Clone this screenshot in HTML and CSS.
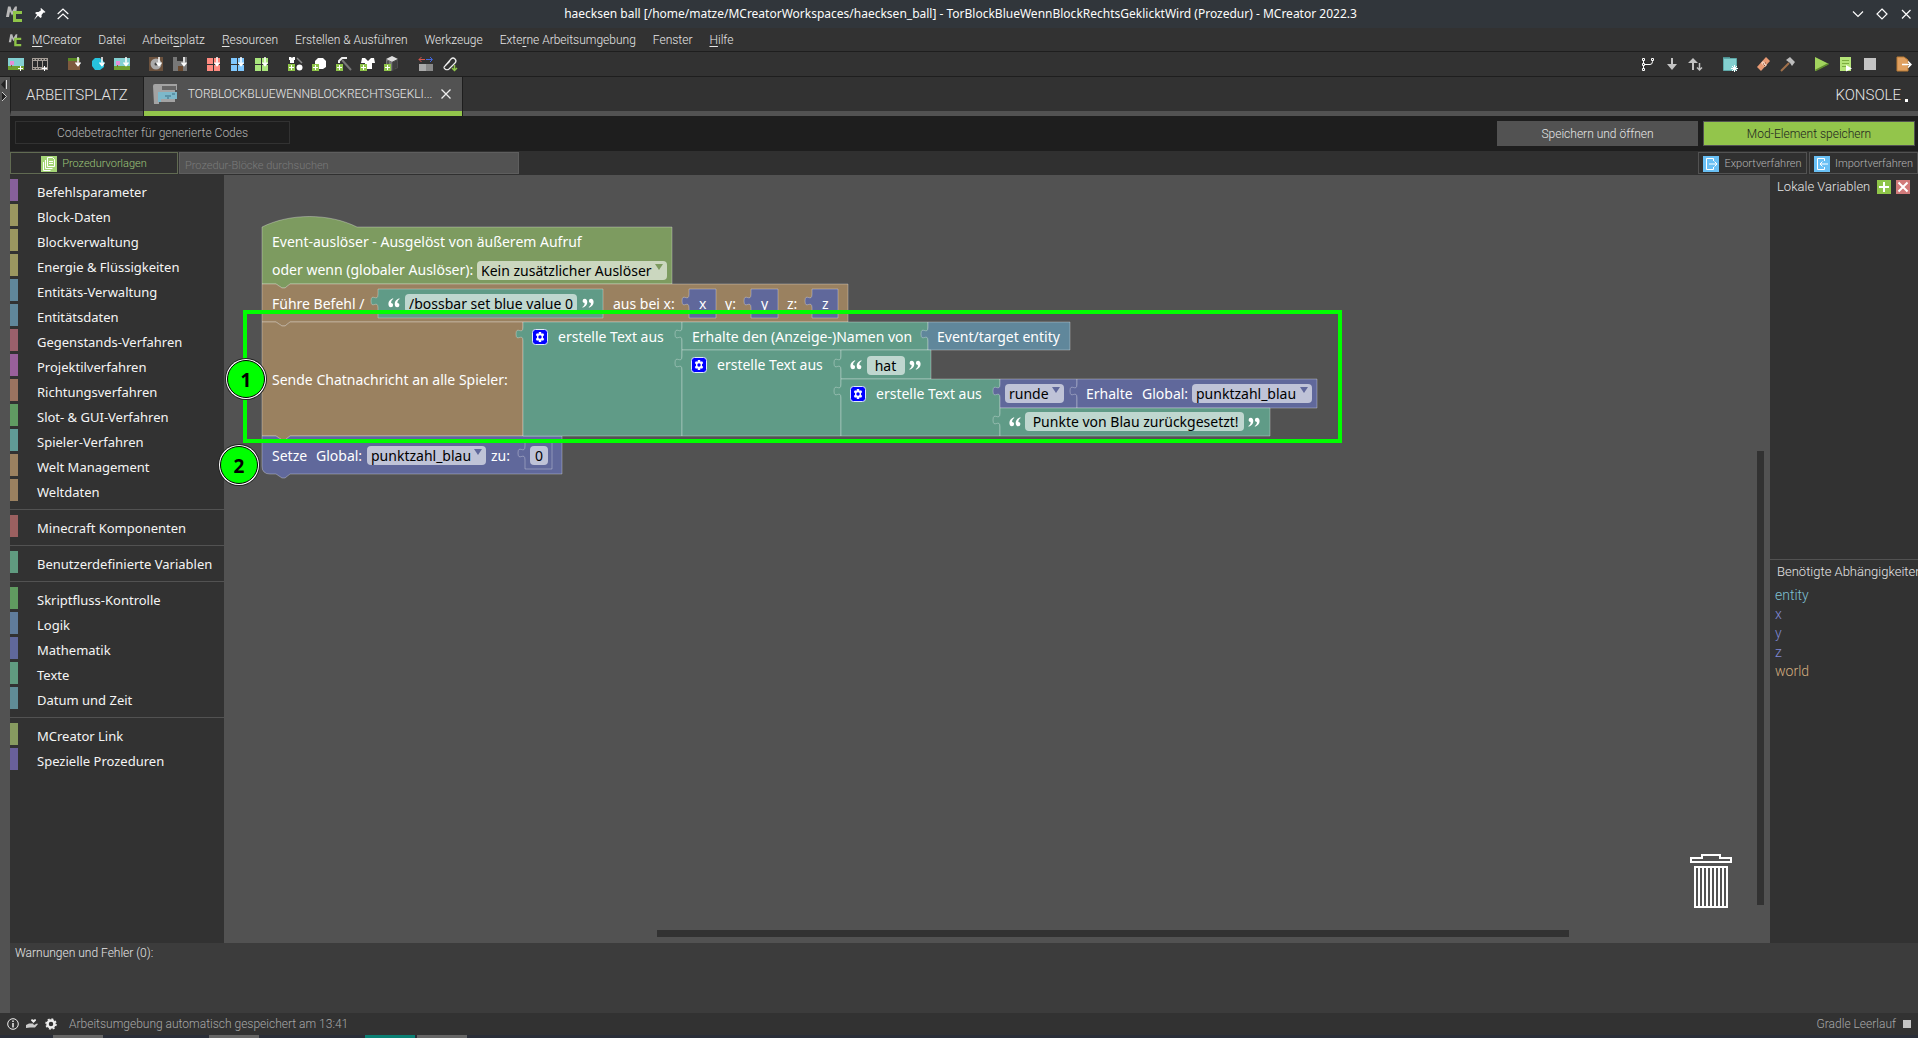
FILE: index.html
```html
<!DOCTYPE html>
<html lang="de">
<head>
<meta charset="utf-8">
<title>haecksen ball - MCreator 2022.3</title>
<link rel="stylesheet" href="styles.css">
</head>
<body>
<svg class="defs" width="0" height="0" aria-hidden="true">
  <defs>
    <symbol id="logo" viewBox="0 0 18 18">
      <path d="M1 12 3 1.500h2.500l1.500 5 3-5H12l-.5 5H9.500L7 10.500 5 6.500 4 12z" fill="#b9b9b9"/>
      <path d="M8 6h9v3h-6v5h6v3H8z" fill="#8fc549"/>
    </symbol>
    <symbol id="down" viewBox="0 0 6 10"><path d="M3 0v8M.5 5.500 3 8.500l2.500-3" fill="none" stroke="#fff" stroke-width="1.500"/></symbol>
    <symbol id="landscape" viewBox="0 0 16 12">
      <path d="M0 0h16v12H0z" fill="#83d0d2"/><path d="M0 8h16v4H0z" fill="#6fa030"/><path d="M2 3h4v4H2z" fill="#e58ed8"/><path d="M3 7h1v2H3z" fill="#83602e"/>
    </symbol>
    <symbol id="windows" viewBox="0 0 13 13"><path d="M0 0h6v6H0zM7 0h6v6H7zM0 7h6v6H0zM7 7h6v6H7z" fill="currentColor"/></symbol>
    <symbol id="plus" viewBox="0 0 7 7"><path d="M0 0h7v7H0z" fill="#8fc549"/><path d="M3 1h1v2h2v1H4v2H3V4H1V3h2z" fill="#fff"/></symbol>
    <symbol id="gear" viewBox="0 0 16 16">
      <rect x=".5" y=".5" width="15" height="15" rx="3" fill="#00f" stroke="#dfe8ff"/>
      <path d="M6.900 3h2.200l.4 1.700 1.600-.5 1.100 1.900L11 7.300v1.400l1.200 1.200-1.100 1.900-1.600-.5-.4 1.700H6.900l-.4-1.700-1.600.5-1.100-1.900L5 8.700V7.300L3.800 6.100l1.100-1.900 1.600.5z" fill="#fff"/>
      <circle cx="8" cy="8" r="1.700" fill="#00f"/>
    </symbol>
    <symbol id="quote-open" viewBox="0 0 12 10">
      <path id="q" d="M5 .3C2.200 1.300.4 3.300.4 6c0 2 1 3.300 2.500 3.300A2.200 2.200 0 0 0 5.100 7.100c0-1.300-.9-2-2-2C3 3.500 3.700 2 5.300 1zM11.300.3C8.500 1.300 6.700 3.300 6.700 6c0 2 1 3.300 2.500 3.300a2.200 2.200 0 0 0 2.200-2.200c0-1.300-.9-2-2-2C9.300 3.500 10 2 11.600 1z" fill="#fff"/>
    </symbol>
    <symbol id="quote-close" viewBox="0 0 12 10"><use href="#q" transform="rotate(180 6 5)"/></symbol>
  </defs>
</svg>

<header class="titlebar">
  <svg width="18" height="18"><use href="#logo"/></svg>
  <svg width="12" height="12" viewBox="0 0 12 12"><path d="M7 0l4.500 4-1.200.8L9.500 4.500 7.500 7l.2 2L6.500 10 4 7.700.5 11.500l-.2-.3L3 6.800 1 5l1.500-1 2 .1L7 2.200 6.500.8z" fill="#fcfcfc"/></svg>
  <svg width="12" height="12" viewBox="0 0 12 12"><path d="M.7 6 6 1l5.300 5M.7 11 6 6l5.300 5" fill="none" stroke="#fcfcfc" stroke-width="1.200"/></svg>
  <h1>haecksen ball [/home/matze/MCreatorWorkspaces/haecksen_ball] - TorBlockBlueWennBlockRechtsGeklicktWird (Prozedur) - MCreator 2022.3</h1>
  <div class="window-buttons">
    <button aria-label="Minimieren"><svg width="12" height="12" viewBox="0 0 12 12"><path d="M1 3.500 6 8.500l5-5" fill="none" stroke="#fcfcfc" stroke-width="1.200"/></svg></button>
    <button aria-label="Maximieren"><svg width="12" height="12" viewBox="0 0 12 12"><path d="M6 1l5 5-5 5-5-5z" fill="none" stroke="#fcfcfc" stroke-width="1.200"/></svg></button>
    <button aria-label="Schließen"><svg width="12" height="12" viewBox="0 0 12 12"><path d="M2 2l8.500 8.500M10.500 2 2 10.500" fill="none" stroke="#fcfcfc" stroke-width="1.200"/></svg></button>
  </div>
</header>

<nav class="menubar">
  <svg width="14" height="14"><use href="#logo"/></svg>
  <button><u>M</u>Creator</button><button>Datei</button><button>Arbeit<u>s</u>platz</button><button><u>R</u>esourcen</button><button>Erstellen &amp; Ausführen</button><button>Werkzeuge</button><button>Exte<u>r</u>ne Arbeitsumgebung</button><button>Fenster</button><button><u>H</u>ilfe</button>
</nav>

<div class="toolbar">
  <div class="tools">
    <button aria-label="Textur"><svg width="16" height="16" viewBox="0 0 16 16"><use href="#landscape" y="2" width="16" height="12"/><path d="M12.500 10v5M10 12.500h5" stroke="#fff"/></svg></button>
    <button aria-label="Animation"><svg width="16" height="16" viewBox="0 0 16 16"><path d="M0 2h16v12H0z" fill="#a79f98"/><path d="M1 5h4v6H1zM6 5h4v6H6zM11 5h4v6h-4z" fill="#2b2b2b"/><path d="M1 3.500h15M1 12.500h15" stroke="#333" stroke-dasharray="1.500"/><path d="M12.500 10v5M10 12.500h5" stroke="#fff"/></svg></button>
  </div>
  <div class="tools">
    <button aria-label="Block importieren"><svg width="16" height="16" viewBox="0 0 16 16"><path d="M2 2h12v12H2z" fill="#7e5a3e"/><path d="M2 2h12v3H2z" fill="#5a8a25"/><use href="#down" x="9" y="1" width="6" height="10"/></svg></button>
    <button aria-label="Objekt importieren"><svg width="16" height="16" viewBox="0 0 16 16"><path d="M5 2h5l4 4v5l-4 3H5l-3-4V5z" fill="#27c3dd"/><use href="#down" x="9" y="1" width="6" height="10"/></svg></button>
    <button aria-label="Bild importieren"><svg width="16" height="16" viewBox="0 0 16 16"><use href="#landscape" y="2" width="16" height="12"/><use href="#down" x="9" y="1" width="6" height="10"/></svg></button>
  </div>
  <div class="tools">
    <button aria-label="Sound importieren"><svg width="16" height="16" viewBox="0 0 16 16"><path d="M1 1h14v14H1z" fill="#6b513d"/><circle cx="8" cy="8" r="5.500" fill="#aaa"/><circle cx="8" cy="8" r="1.500" fill="#444"/><use href="#down" x="8" y="1" width="6" height="10"/></svg></button>
    <button aria-label="Struktur importieren"><svg width="16" height="16" viewBox="0 0 16 16"><path d="M1 1h4v4h6V1h4v14H1z" fill="#777"/><path d="M6 10h5v5H6z" fill="#6b4a30"/><use href="#down" x="9" y="1" width="6" height="10"/></svg></button>
  </div>
  <div class="tools">
    <button aria-label="Java-Modell" class="red"><svg width="16" height="16" viewBox="0 0 16 16"><use href="#windows" x="1" y="2" width="13" height="13"/><use href="#down" x="8" y="1" width="6" height="10"/></svg></button>
    <button aria-label="JSON-Modell" class="blue"><svg width="16" height="16" viewBox="0 0 16 16"><use href="#windows" x="1" y="2" width="13" height="13"/><use href="#down" x="8" y="1" width="6" height="10"/></svg></button>
    <button aria-label="OBJ-Modell" class="lime"><svg width="16" height="16" viewBox="0 0 16 16"><use href="#windows" x="1" y="2" width="13" height="13"/><use href="#down" x="8" y="1" width="6" height="10"/></svg></button>
  </div>
  <div class="tools">
    <button aria-label="Materialpaket"><svg width="16" height="16" viewBox="0 0 16 16"><path d="M1 1h2l1 1 1-1h2v3H6v3H2V4H1z" fill="#fff"/><path d="M9 2l5 5" stroke="#888" stroke-width="1.500"/><circle cx="11.500" cy="11.500" r="3" fill="#fff"/><use href="#plus" y="8" width="7" height="7"/></svg></button>
    <button aria-label="Erzpaket"><svg width="16" height="16" viewBox="0 0 16 16"><path d="M6 2h5l3 3v6l-3 2H5L3 9V5z" fill="#fff"/><use href="#plus" y="8" width="7" height="7"/></svg></button>
    <button aria-label="Werkzeugpaket"><svg width="16" height="16" viewBox="0 0 16 16"><path d="M3 7V5l3-3h5" fill="none" stroke="#eee" stroke-width="2"/><path d="M6 4l9 10" stroke="#777" stroke-width="2"/><use href="#plus" y="8" width="7" height="7"/></svg></button>
    <button aria-label="Rüstungspaket"><svg width="16" height="16" viewBox="0 0 16 16"><path d="M2 2h3l3 3 3-3h3l1 5h-3v6H5V7H1z" fill="#fff"/><use href="#plus" y="8" width="7" height="7"/></svg></button>
    <button aria-label="Holzpaket"><svg width="16" height="16" viewBox="0 0 16 16"><path d="M8 0l6 3-6 3-6-3z" fill="#ddd"/><path d="M2 3l6 3v9l-6-3z" fill="#777"/><path d="M14 3 8 6v9l6-3z" fill="#4d4d4d"/><path d="M4 5v8M10 6v8M12 5v7" stroke="#333"/><use href="#plus" y="8" width="7" height="7"/></svg></button>
  </div>
  <div class="tools">
    <button aria-label="Koordinaten"><svg width="16" height="16" viewBox="0 0 16 16"><path d="M1 8h7v7H1z" fill="#aaa"/><path d="M8 8h7v7H8z" fill="#888"/><path d="M1 3.500h6M3.500 1 1 3.500 3.500 6" stroke="#d8584e" fill="none"/><path d="M8 3.500h6M12 1l2.500 2.500L12 6" stroke="#4268e0" fill="none"/></svg></button>
    <button aria-label="Anhang"><svg width="16" height="16" viewBox="0 0 16 16"><path d="M3 10 9 3q2-2 4 0t0 4l-6 6q-2 1.500-4 0t0-3l5-5" fill="none" stroke="#eee" stroke-width="1.200"/><path d="M12.500 9v5M10 12l2.500 2.500L15 12" stroke="#8fc549" fill="none" stroke-width="1.500"/></svg></button>
  </div>
  <div class="tools right">
    <button aria-label="Verzweigung"><svg width="16" height="16" viewBox="0 0 16 16"><path d="M3.500 3v10M3.500 8.500H10q2.500 0 2.500-3V3" fill="none" stroke="#fff"/><path d="M2.500 2.500h2v2h-2zM2.500 12.500h2v2h-2zM11.500 2.500h2v2h-2zM2.500 7.500h2v2h-2z" fill="#333" stroke="#fff"/></svg></button>
    <button aria-label="Holen"><svg width="16" height="16" viewBox="0 0 16 16"><path d="M7 2h2v6h4l-5 6-5-6h4z" fill="#c4c4c4"/></svg></button>
    <button aria-label="Synchronisieren"><svg width="16" height="16" viewBox="0 0 16 16"><path d="M5 2l5 5H6v7H4V7H0z" fill="#c4c4c4"/><path d="M11.500 7v7M9 11.500l2.500 2.500 2.500-2.500" stroke="#c4c4c4" stroke-width="1.500" fill="none"/></svg></button>
  </div>
  <div class="tools">
    <button aria-label="Arbeitsordner"><svg width="16" height="16" viewBox="0 0 16 16"><path d="M1 1h7v2H1z" fill="#4d8f8f"/><path d="M1.500 2.500h13v12h-13z" fill="#84d0d0" stroke="#5ea8a8"/><path d="M12.500 9v7M9 12.500h7M10 10l5 5M15 10l-5 5" stroke="#fff"/></svg></button>
  </div>
  <div class="tools">
    <button aria-label="Reparieren"><svg width="16" height="16" viewBox="0 0 16 16"><path d="M1 11 10 1l4 4L5 15z" fill="#e79a74"/><path d="M5 7l4 4 2-2-4-4z" fill="#f3cdb8"/><path d="M7 8h1M9 7h1M8 9.500h1" stroke="#8a4f35"/></svg></button>
    <button aria-label="Bauen"><svg width="16" height="16" viewBox="0 0 16 16"><path d="M1 15 9 7" stroke="#a0704a" stroke-width="2"/><path d="M6 4l4-3 5 5-3 4-2-3z" fill="#bdbdbd"/></svg></button>
  </div>
  <div class="tools">
    <button aria-label="Client starten"><svg width="16" height="16" viewBox="0 0 16 16"><path d="M1 1l14 7-14 7z" fill="#a2d45e"/><path d="M1.500 14.500 14 8" stroke="#5e8a2c" stroke-width="1.500"/></svg></button>
    <button aria-label="Server starten"><svg width="16" height="16" viewBox="0 0 16 16"><path d="M2 1h11v14H2z" fill="#b4e378"/><path d="M4 4.500h7M4 7.500h7M4 10.500h4" stroke="#7cae40"/><path d="M8 9l6 3.500-6 3z" fill="#fff"/></svg></button>
    <button aria-label="Stopp"><svg width="16" height="16" viewBox="0 0 16 16"><path d="M2 2h12v12H2z" fill="#c4c4c4"/></svg></button>
  </div>
  <div class="tools">
    <button aria-label="Exportieren"><svg width="16" height="16" viewBox="0 0 16 16"><path d="M1 1h7l4 3v11H1z" fill="#e0a060" stroke="#b97a35"/><path d="M6 8.500h9M12 5.500l3 3-3 3" stroke="#fff" stroke-width="1.500" fill="none"/></svg></button>
  </div>
</div>

<div class="main">
  <aside class="gutter">
    <svg width="10" height="24" viewBox="0 0 10 24"><path d="M5 1v9L1 5.500z" fill="#222"/><path d="M6.500 1v9" stroke="#ddd"/><path d="M2 13v9l4-4.500z" fill="#222"/><path d="M2 13l4.500 4.500L2 22" fill="none" stroke="#ccc"/></svg>
  </aside>
  <div class="content">
    <div class="tabs">
      <button class="tab">ARBEITSPLATZ</button>
      <button class="tab active">
        <svg width="26" height="22" viewBox="0 0 26 22"><path d="M0 3q0-2 2-2h22v6h-2v12H6v2H1z" fill="#a3a3a3"/><path d="M9 3h14v4H9z" fill="#666"/><path d="M5 9h19v7H8v3H5z" fill="#7db8ca"/><path d="M12 13h6M19 11h3M14 15h2" stroke="#3d6f85"/></svg>
        <span>TORBLOCKBLUEWENNBLOCKRECHTSGEKLI...</span>
        <svg width="10" height="10" viewBox="0 0 10 10"><path d="M.5.5l9 9M9.500.5l-9 9" stroke="#eee" stroke-width="1.300"/></svg>
      </button>
      <button class="tab console">KONSOLE<i></i></button>
    </div>

    <div class="actions">
      <button class="code-viewer">Codebetrachter für generierte Codes</button>
      <button class="save-open">Speichern und öffnen</button>
      <button class="save">Mod-Element speichern</button>
    </div>

    <div class="procbar">
      <button class="templates"><svg width="16" height="16" viewBox="0 0 16 16"><path d="M0 0h16v16H0z" fill="#a5d577"/><path d="M6.500 1.500h5l2 2v7h-7zM4.500 4v8.500h7M2.500 6v8.500h7M8 5.500h4M8 7.500h4" fill="none" stroke="#fff"/></svg>Prozedurvorlagen</button>
      <input type="text" aria-label="Prozedur-Blöcke durchsuchen" placeholder="Prozedur-Blöcke durchsuchen">
      <button class="port first"><svg width="16" height="16" viewBox="0 0 16 16"><path d="M0 0h16v16H0z" fill="#69c0f5"/><path d="M10.500 5V2.500h-7v11h7V11M6 8h8M11.500 5.500 14 8l-2.500 2.500" fill="none" stroke="#fff"/></svg>Exportverfahren</button>
      <button class="port"><svg width="16" height="16" viewBox="0 0 16 16"><path d="M0 0h16v16H0z" fill="#69c0f5"/><path d="M10.500 5V2.500h-7v11h7V11M6 8h8M8.500 5.500 6 8l2.500 2.500" fill="none" stroke="#fff"/></svg>Importverfahren</button>
    </div>

    <div class="editor">
      <nav class="toolbox">
        <ul>
          <li class="c-purple">Befehlsparameter</li>
          <li class="c-olive">Block-Daten</li>
          <li class="c-olive">Blockverwaltung</li>
          <li class="c-olive">Energie &amp; Flüssigkeiten</li>
          <li class="c-steel">Entitäts-Verwaltung</li>
          <li class="c-steel">Entitätsdaten</li>
          <li class="c-rose">Gegenstands-Verfahren</li>
          <li class="c-magenta">Projektilverfahren</li>
          <li class="c-clay">Richtungsverfahren</li>
          <li class="c-green">Slot- &amp; GUI-Verfahren</li>
          <li class="c-aqua">Spieler-Verfahren</li>
          <li class="c-brown">Welt Management</li>
          <li class="c-brown">Weltdaten</li>
        </ul>
        <ul><li class="c-red">Minecraft Komponenten</li></ul>
        <ul><li class="c-teal">Benutzerdefinierte Variablen</li></ul>
        <ul>
          <li class="c-leaf">Skriptfluss-Kontrolle</li>
          <li class="c-blue">Logik</li>
          <li class="c-indigo">Mathematik</li>
          <li class="c-teal">Texte</li>
          <li class="c-petrol">Datum und Zeit</li>
        </ul>
        <ul>
          <li class="c-moss">MCreator Link</li>
          <li class="c-violet">Spezielle Prozeduren</li>
        </ul>
      </nav>

      <main class="workspace">
        <svg class="blocks" width="1130" height="325" viewBox="224 175 1130 325">
          <g class="shapes">
            <path class="event" d="M262 227c28-14 67-14 95 0h315v57H290l-5 4h-3l-6-4h-14z"/>
            <path class="world" d="M262 284h14l6 4h3l5-4h558v38H290l-5 4h-3l-6-4h-14z"/>
            <path class="world" d="M262 322h14l6 4h3l5-4h233v114H290l-5 4h-3l-6-4h-14z"/>
            <path class="math" d="M262 436h14l6 4h3l5-4h272v38H290l-5 4h-3l-6-4h-6q-8 0-8-8z"/>
            <path class="text" d="M378 289h225v29H378v-10c0-9-7 2-7-7s7 2 7-7z"/>
            <path class="math" d="M689 289h27v29h-27v-10c0-9-7 2-7-7s7 2 7-7z"/>
            <path class="math" d="M751 289h27v29h-27v-10c0-9-7 2-7-7s7 2 7-7z"/>
            <path class="math" d="M812 289h26v29h-26v-10c0-9-7 2-7-7s7 2 7-7z"/>
            <path class="text" d="M523 322h159v114H523v-95c0-9-7 2-7-7s7 2 7-7z"/>
            <path class="text" d="M682 322h246v28H682v-9c0-9-7 2-7-7s7 2 7-7z"/>
            <path class="entity" d="M928 322h142v28H928v-9c0-9-7 2-7-7s7 2 7-7z"/>
            <path class="text" d="M682 350h159v86H682v-66c0-9-7 2-7-7s7 2 7-7z"/>
            <path class="text" d="M841 350h90v29h-90v-9c0-9-7 2-7-7s7 2 7-7z"/>
            <path class="text" d="M841 379h159v57H841v-38c0-9-7 2-7-7s7 2 7-7z"/>
            <path class="math" d="M1000 379h77v29h-77v-10c0-9-7 2-7-7s7 2 7-7z"/>
            <path class="math" d="M1077 379h240v29h-240v-10c0-9-7 2-7-7s7 2 7-7z"/>
            <path class="text" d="M1000 408h270v28h-270v-9c0-9-7 2-7-7s7 2 7-7z"/>
            <path class="math" d="M525 441h27v28h-27v-9c0-9-7 2-7-7s7 2 7-7z"/>
          </g>
          <g class="labels">
            <text x="272" y="247">Event-auslöser - Ausgelöst von äußerem Aufruf</text>
            <text x="272" y="275">oder wenn (globaler Auslöser):</text>
            <text x="272" y="309">Führe Befehl /</text>
            <text x="613" y="309">aus bei x:</text>
            <text x="699" y="309">x</text>
            <text x="725" y="309">y:</text>
            <text x="761" y="309">y</text>
            <text x="787" y="309">z:</text>
            <text x="822" y="309">z</text>
            <text x="272" y="385">Sende Chatnachricht an alle Spieler:</text>
            <text x="558" y="342">erstelle Text aus</text>
            <text x="692" y="342">Erhalte den (Anzeige-)Namen von</text>
            <text x="937" y="342">Event/target entity</text>
            <text x="717" y="370">erstelle Text aus</text>
            <text x="876" y="399">erstelle Text aus</text>
            <text x="1086" y="399">Erhalte</text>
            <text x="1142" y="399">Global:</text>
            <text x="272" y="461">Setze</text>
            <text x="316" y="461">Global:</text>
            <text x="491" y="461">zu:</text>
          </g>
          <use href="#gear" x="532" y="329" width="16" height="16"/>
          <use href="#gear" x="691" y="357" width="16" height="16"/>
          <use href="#gear" x="850" y="386" width="16" height="16"/>
          <use href="#quote-open" x="388" y="298" width="12" height="10"/>
          <use href="#quote-close" x="582" y="298" width="12" height="10"/>
          <use href="#quote-open" x="850" y="360" width="12" height="10"/>
          <use href="#quote-close" x="909" y="360" width="12" height="10"/>
          <use href="#quote-open" x="1009" y="417" width="12" height="10"/>
          <use href="#quote-close" x="1248" y="417" width="12" height="10"/>
        </svg>

        <div class="field drop trigger"><select aria-label="Globaler Auslöser"><option>Kein zusätzlicher Auslöser</option></select></div>
        <input class="field command" type="text" aria-label="Befehl" value="/bossbar set blue value 0">
        <input class="field hat" type="text" aria-label="Text" value=" hat ">
        <div class="field drop round"><select aria-label="Rundung"><option>runde</option></select></div>
        <div class="field drop get-var"><select aria-label="Globale Variable lesen"><option>punktzahl_blau</option></select></div>
        <input class="field message" type="text" aria-label="Nachricht" value=" Punkte von Blau zurückgesetzt!">
        <div class="field drop set-var"><select aria-label="Globale Variable setzen"><option>punktzahl_blau</option></select></div>
        <input class="field number" type="text" aria-label="Zahl" value="0">

        <div class="highlight"></div>
        <span class="marker one">1</span>
        <span class="marker two">2</span>

        <svg class="trash" width="42" height="54" viewBox="0 0 42 54"><path d="M1 8V4h11V1h18v3h11v4z" fill="none" stroke="#fff" stroke-width="2"/><path d="M5 13h32v40H5zM9 13v40M13 13v40M17 13v40M21 13v40M25 13v40M29 13v40M33 13v40" fill="none" stroke="#fff" stroke-width="2"/></svg>
        <div class="scroll-v"></div>
        <div class="scroll-h"></div>
      </main>

      <aside class="sidebar">
        <section class="locals">
          <h2>Lokale Variablen</h2>
          <button aria-label="Hinzufügen"><svg width="14" height="14" viewBox="0 0 14 14"><path d="M0 0h14v14H0z" fill="#8fc549"/><path d="M7 2v10M2 7h10" stroke="#fff" stroke-width="2"/></svg></button>
          <button aria-label="Entfernen"><svg width="14" height="14" viewBox="0 0 14 14"><path d="M0 0h14v14H0z" fill="#d17a7a"/><path d="M2.500 2.500l9 9M11.500 2.500l-9 9" stroke="#fff" stroke-width="2"/></svg></button>
        </section>
        <section class="deps">
          <h2>Benötigte Abhängigkeiten</h2>
          <ul><li class="t-entity">entity</li><li class="t-num">x</li><li class="t-num">y</li><li class="t-num">z</li><li class="t-world">world</li></ul>
        </section>
      </aside>
    </div>

    <section class="warnings">Warnungen und Fehler (0):</section>
  </div>
</div>

<footer class="status">
  <svg width="12" height="12" viewBox="0 0 12 12"><circle cx="6" cy="6" r="5.300" fill="none" stroke="#eee"/><path d="M6 2.500v1.500M6 5v4.500" stroke="#eee" stroke-width="1.500"/></svg>
  <svg width="12" height="10" viewBox="0 0 12 10"><path d="M5 1.500C5 0 7 0 7.500 1 8 0 10.500 0 10 1.500L7.500 4z" fill="#eee"/><path d="M0 6l3-1.500h4L8 6l3-1.500 1 .5-3 3.500H4L0 9z" fill="#ccc"/></svg>
  <svg width="12" height="12" viewBox="0 0 12 12"><circle cx="6" cy="6" r="3.500" fill="none" stroke="#eee" stroke-width="2.500"/><circle cx="6" cy="6" r="5" fill="none" stroke="#eee" stroke-width="1.500" stroke-dasharray="2 1.900"/></svg>
  <span>Arbeitsumgebung automatisch gespeichert am 13:41</span>
  <span class="gradle">Gradle Leerlauf</span><i></i>
</footer>
<div class="taskbar"><i></i><i></i><i class="on"></i><i class="near"></i></div>
</body>
</html>
```
FILE: styles.css
```css
* { box-sizing: border-box; }
body {
  margin: 0;
  min-height: 100vh;
  display: flex;
  flex-direction: column;
  overflow: hidden;
  background: #323232;
  color: #e6e6e6;
  font: 300 12px/16px Roboto, sans-serif;
}
button {
  margin: 0;
  padding: 0;
  border: 0;
  background: none;
  color: inherit;
  font: inherit;
  display: flex;
  align-items: center;
  justify-content: center;
  white-space: nowrap;
}
svg { flex: none; display: block; }
h1, h2, ul { margin: 0; padding: 0; font: inherit; list-style: none; }
.defs { position: absolute; }

/* window frame */
.titlebar {
  height: 28px;
  padding: 0 6px 0 5px;
  display: flex;
  align-items: center;
  gap: 11px;
  background: #31363b;
  color: #fcfcfc;
}
.titlebar h1 { flex: 1; text-align: center; font: 400 12px/16px "Noto Sans", sans-serif; }
.window-buttons { display: flex; gap: 12px; }
.menubar {
  height: 24px;
  padding: 0 8px;
  display: flex;
  align-items: center;
  gap: 17px;
  border-bottom: 1px solid #1e1e1e;
}
.menubar svg { margin-right: -7px; }
.menubar u { text-underline-offset: 2px; }

.toolbar {
  height: 25px;
  padding: 0 2px 0 4px;
  display: flex;
  align-items: center;
  gap: 10px;
  border-bottom: 1px solid #1e1e1e;
}
.tools { display: flex; }
.tools button { width: 24px; height: 24px; }
.tools.right { margin-left: auto; }
.red { color: #ff8a80; }
.blue { color: #80c8ff; }
.lime { color: #a9e67c; }

.main { flex: 1; display: flex; }
.gutter { width: 10px; padding-top: 2px; background: #525252; }
.content { flex: 1; min-width: 0; display: flex; flex-direction: column; }

/* tabs */
.tabs { height: 39px; display: flex; background: #323232; border-bottom: 5px solid #525252; border-left: 1px solid #1e1e1e; }
.tab { height: 34px; padding: 2px 15px 0; font-size: 15px; }
.tab.active {
  height: 39px;
  padding: 0 11px 5px 9px;
  gap: 9px;
  font-size: 12px;
  background: #525252;
  border: solid #1e1e1e;
  border-width: 0 1px;
  box-shadow: inset 0 -5px #93c54b;
}
.tab.console { margin-left: auto; padding: 2px 10px 0; gap: 4px; }
.console i { width: 3px; height: 3px; margin-top: 10px; background: #fff; }

.actions {
  height: 35px;
  padding: 5px 3px 5px 5px;
  display: flex;
  align-items: flex-start;
  gap: 5px;
  background: #1e1e1e;
}
.actions button { height: 25px; }
.actions .code-viewer { width: 275px; height: 23px; margin-right: auto; border: 1px solid #323232; color: #b4b4b4; }
.actions .save-open { width: 201px; background: #525252; }
.actions .save { width: 212px; background: #93c54b; border: 1px solid #525252; color: #1e1e1e; }

.procbar { height: 24px; padding: 1px 0; display: flex; gap: 1px; background: #303030; font-size: 11px; }
.procbar button { height: 22px; padding-top: 1px; gap: 5px; border: 1px solid #525252; color: #b4b4b4; }
.procbar .templates { width: 168px; border-color: #616b52; color: #9fc67a; }
.procbar input {
  width: 340px;
  height: 22px;
  padding: 5px 5px 0;
  border: 1px solid #5e5e5e;
  background: #525252;
  font: 300 11px/14px Roboto, sans-serif;
  color: #e6e6e6;
}
.procbar input::placeholder { color: #7a7a7a; opacity: 1; }
.procbar .port { width: 109px; margin-left: 1px; }
.procbar .port.first { margin-left: auto; }

/* editor */
.editor { flex: 1; display: flex; }
.toolbox { width: 214px; padding-top: 4px; font: 400 13px/22px "Noto Sans", sans-serif; color: #f5f5f5; }
.toolbox ul + ul { margin-top: 8px; padding-top: 5px; border-top: 1px solid #525252; }
.toolbox li {
  height: 22px;
  margin-bottom: 3px;
  padding: 2px 0 0 19px;
  border-style: solid;
  border-width: 0 0 0 8px;
  white-space: nowrap;
}
.c-purple { border-color: #87609b; }
.c-olive { border-color: #9b9760; }
.c-steel { border-color: #60879b; }
.c-rose { border-color: #9b606b; }
.c-magenta { border-color: #99609b; }
.c-clay { border-color: #9b7360; }
.c-green { border-color: #609b62; }
.c-aqua { border-color: #609b96; }
.c-brown { border-color: #9b8160; }
.c-red { border-color: #9b6060; }
.c-teal { border-color: #609b80; }
.c-leaf { border-color: #609b60; }
.c-blue { border-color: #607c9b; }
.c-indigo { border-color: #60689b; }
.c-petrol { border-color: #608c96; }
.c-moss { border-color: #879b60; }
.c-violet { border-color: #69609b; }

.workspace { flex: 1; min-width: 0; position: relative; z-index: 1; background: #525252; }
.blocks { position: absolute; left: 0; top: 0; }
.shapes path { stroke: rgba(255, 255, 255, 0.3); stroke-width: 1; }
.event { fill: #7d9b60; }
.world { fill: #9a8160; }
.math { fill: #60689b; }
.text { fill: #609b87; }
.entity { fill: #60879b; }
.labels text { font: 400 14px "Noto Sans", sans-serif; fill: #fff; }

.field {
  position: absolute;
  height: 19px;
  padding: 0 4px;
  border: 0;
  border-radius: 4px;
  font: 400 14px/19px "Noto Sans", sans-serif;
  color: #000;
  white-space: pre;
}
.drop { padding: 0; background: #bfc3d7; }
.drop select {
  width: 100%;
  height: 19px;
  padding: 0 4px;
  border: 0;
  background: none;
  appearance: none;
  font: inherit;
  color: inherit;
}
.drop::after {
  content: "";
  position: absolute;
  right: 4px;
  top: 3px;
  border: solid transparent;
  border-width: 6px 4px 0;
  border-top-color: #60689b;
}
.trigger { left: 253px; top: 86px; width: 190px; background: #cbd7bf; }
.trigger::after { border-top-color: #7d9b60; }
.command { left: 181px; top: 119px; width: 172px; background: #bfd7cf; }
.hat { left: 643px; top: 181px; width: 38px; background: #bfd7cf; }
.round { left: 781px; top: 209px; width: 59px; }
.get-var { left: 968px; top: 209px; width: 120px; }
.message { left: 801px; top: 237px; width: 219px; background: #bfd7cf; }
.set-var { left: 143px; top: 271px; width: 119px; }
.number { left: 306px; top: 271px; width: 18px; padding: 0 5px; background: #bfc3d7; }

.highlight { position: absolute; left: 19px; top: 135px; width: 1099px; height: 133px; border: 4px solid #0f0; }
.marker {
  position: absolute;
  width: 38px;
  height: 38px;
  border: 1px solid #000;
  border-radius: 50%;
  background: #0f0;
  box-shadow: 0 0 0 1px #fff, 0 0 0 2px #222;
  color: #000;
  font: 700 19px/38px "Noto Sans", sans-serif;
  text-align: center;
}
.one { left: 3px; top: 185px; }
.two { left: -4px; top: 271px; }
.trash { position: absolute; right: 38px; bottom: 35px; }
.scroll-v { position: absolute; right: 6px; top: 36%; width: 7px; height: 59%; background: #323232; }
.scroll-h { position: absolute; left: 28%; right: 13%; bottom: 6px; height: 7px; background: #323232; }

.sidebar { width: 148px; display: flex; flex-direction: column; overflow: hidden; font-size: 13px; }
.sidebar h2 { white-space: nowrap; }
.locals { flex: 1; padding: 4px 8px 4px 7px; display: flex; align-items: flex-start; gap: 5px; }
.locals h2 { flex: 1; }
.locals button { margin: 1px 0; }
.deps { flex: 1; padding: 4px 5px; border-top: 1px solid #525252; }
.deps h2 { padding-left: 2px; margin-bottom: 6px; }
.deps li { font-size: 14px; line-height: 19px; }
.t-entity { color: #7fc0d3; }
.t-num { color: #7f88d3; }
.t-world { color: #d3ad7f; }

.warnings { height: 70px; padding: 2px 5px; background: #3c3c3c; }
.status { height: 22px; padding: 0 7px; display: flex; align-items: center; gap: 7px; color: #a8a8a8; }
.status span { margin-left: 5px; }
.status .gradle { margin-left: auto; }
.status i { width: 8px; height: 8px; background: #c4c4c4; }
.taskbar { height: 3px; display: flex; gap: 106px; padding-left: 53px; background: #2a2e38; }
.taskbar i { width: 50px; background: #666; }
.taskbar .on { background: #0a8074; }
.taskbar .near { margin-left: -104px; }
```
